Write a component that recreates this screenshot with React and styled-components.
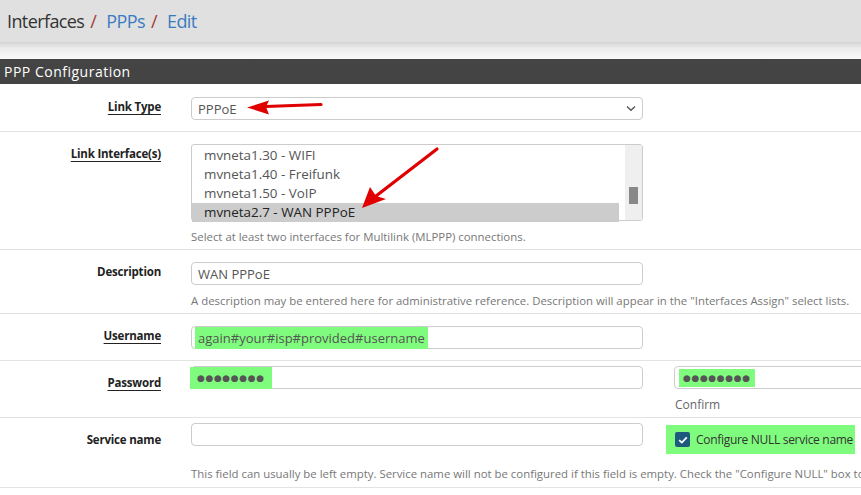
import React from "react";
import styled, { createGlobalStyle } from "styled-components";

const Global = createGlobalStyle`
  html, body { margin: 0; padding: 0; background: #fff; overflow: hidden; }
  body { font-family: "Open Sans", "Noto Sans", Arial, sans-serif; color: #333; }
  * { box-sizing: border-box; }
`;

const Page = styled.div`
  position: relative;
  width: 861px;
  height: 495px;
  overflow: hidden;
`;

const TopBar = styled.div`
  height: 42px;
  background: #e0e0e0;
  display: flex;
  align-items: center;
  padding-left: 7px;
  font-size: 18px;
  letter-spacing: -0.6px;
`;

const Crumb = styled.span`
  color: ${(p) => (p.$link ? "#3b7bc0" : "#333")};
`;

const Sep = styled.span`
  color: #a33b3b;
  margin: 0 10px 0 6px;
`;

const Shade = styled.div`
  height: 17px;
  background: linear-gradient(#d4d4d4, #ececec 40%, #f8f8f8);
  border-bottom: 1px solid #fafafa;
`;

const PanelHead = styled.div`
  height: 25px;
  background: #444;
  color: #fff;
  font-size: 14px;
  letter-spacing: 0.5px;
  padding-left: 4px;
  display: flex;
  align-items: center;
`;

const Row = styled.div`
  display: grid;
  grid-template-columns: 161px 452px 1fr;
  column-gap: 30px;
  align-items: start;
  padding: ${(p) => p.$pad || "12px 0 11px"};
  border-bottom: 1px solid #e3e3e3;
`;

const Label = styled.div`
  text-align: right;
  font-size: 11.5px;
  font-weight: 700;
  letter-spacing: -0.2px;
  color: #222;
  line-height: 20px;
  text-decoration: ${(p) => (p.$u ? "underline" : "none")};
  text-underline-offset: 3px;
`;

const Field = styled.div`
  display: flex;
  flex-direction: column;
  margin-top: ${(p) => p.$shift || 0}px;
`;

const Box = styled.div`
  height: 23px;
  border: 1px solid #ccc;
  border-radius: 4px;
  background: #fff;
  display: flex;
  align-items: center;
  padding: 0 6px;
  font-size: 13px;
  color: #555;
  white-space: nowrap;
  position: relative;
`;

const SelectBox = styled(Box)`
  justify-content: space-between;
  padding-right: 6px;
`;

const ListBox = styled.div`
  height: 77px;
  border: 1px solid #ccc;
  border-radius: 3px;
  display: flex;
  font-size: 13.4px;
  color: #555;
`;

const Items = styled.div`
  flex: 1;
  margin-right: 6px;
  display: flex;
  flex-direction: column;
  padding-top: 1px;
`;

const Item = styled.div`
  height: 19px;
  line-height: 19px;
  padding-left: 12px;
  background: ${(p) => (p.$sel ? "#cccccc" : "transparent")};
  color: ${(p) => (p.$sel ? "#222" : "#555")};
`;

const Track = styled.div`
  width: 17px;
  background: #efefef;
  display: flex;
  justify-content: center;
  padding-top: 42px;
`;

const Thumb = styled.div`
  width: 9px;
  height: 17px;
  background: #888;
`;

const Help = styled.div`
  font-size: 11.4px;
  color: #777;
  line-height: 16px;
  margin-top: ${(p) => p.$mt || 8}px;
  white-space: nowrap;
`;

const ConfirmText = styled(Help)`
  margin-left: 2px;
  font-size: 12px;
  color: #666;
`;

const Mark = styled.span`
  background: #7ffc7d;
  display: inline-flex;
  align-items: center;
  height: ${(p) => p.$h || 22}px;
  padding: 0 ${(p) => p.$px || 4}px;
  margin-left: ${(p) => p.$ml || 0}px;
`;

const Dots = styled.span`
  font-family: "DejaVu Sans", sans-serif;
  font-size: 9px;
  letter-spacing: 0.6px;
  color: #555;
`;

const Third = styled.div`
  display: flex;
  flex-direction: column;
  margin-top: ${(p) => p.$shift || 0}px;
`;

const ConfirmBox = styled(Box)`
  margin-left: 1px;
  width: 460px;
  padding-left: 4px;
`;

const CheckWrap = styled.label`
  margin-left: -7px;
  margin-top: 2px;
  width: 189px;
  height: 29px;
  background: #7ffc7d;
  display: flex;
  align-items: center;
  padding-left: 9px;
  gap: 6px;
  font-size: 12px;
  letter-spacing: -0.3px;
  color: #333;
  white-space: nowrap;
`;

const CheckBox = styled.span`
  width: 15px;
  height: 15px;
  border-radius: 2px;
  background: #1d5a7e;
  display: inline-flex;
  align-items: center;
  justify-content: center;
  flex: none;
`;

const Overlay = styled.svg`
  position: absolute;
  left: 0;
  top: 0;
  pointer-events: none;
`;

export default function App() {
  return (
    <Page>
      <Global />
      <TopBar>
        <Crumb>Interfaces</Crumb>
        <Sep>/</Sep>
        <Crumb $link>PPPs</Crumb>
        <Sep>/</Sep>
        <Crumb $link>Edit</Crumb>
      </TopBar>
      <Shade />
      <PanelHead>PPP Configuration</PanelHead>

      <Row $pad="13px 0 11px">
        <Label $u>Link Type</Label>
        <Field>
          <SelectBox>
            <span>PPPoE</span>
            <svg width="10" height="7" viewBox="0 0 10 7">
              <path d="M1 1.5 L5 5.2 L9 1.5" fill="none" stroke="#555" strokeWidth="1.4" />
            </svg>
          </SelectBox>
        </Field>
        <div />
      </Row>

      <Row $pad="12px 0 4px">
        <Label $u>Link Interface(s)</Label>
        <Field>
          <ListBox>
            <Items>
              <Item>mvneta1.30 - WIFI</Item>
              <Item>mvneta1.40 - Freifunk</Item>
              <Item>mvneta1.50 - VoIP</Item>
              <Item $sel>mvneta2.7 - WAN PPPoE</Item>
            </Items>
            <Track>
              <Thumb />
            </Track>
          </ListBox>
          <Help>Select at least two interfaces for Multilink (MLPPP) connections.</Help>
        </Field>
        <div />
      </Row>

      <Row $pad="12px 0 4px">
        <Label>Description</Label>
        <Field>
          <Box>WAN PPPoE</Box>
          <Help>
            A description may be entered here for administrative reference. Description will appear in the "Interfaces Assign" select lists.
          </Help>
        </Field>
        <div />
      </Row>

      <Row $pad="12px 0 11px">
        <Label $u>Username</Label>
        <Field>
          <Box style={{ paddingLeft: 3 }}>
            <Mark $px={3}>again#your#isp#provided#username</Mark>
          </Box>
        </Field>
        <div />
      </Row>

      <Row $pad="12px 0 4px">
        <Label $u>Password</Label>
        <Field $shift={-7}>
          <Box style={{ paddingLeft: 0 }}>
            <Mark $px={7} $ml={-2}>
              <Dots>●●●●●●●●</Dots>
            </Mark>
          </Box>
        </Field>
        <Third $shift={-7}>
          <ConfirmBox>
            <Mark $h={18} $px={4}>
              <Dots>●●●●●●●●</Dots>
            </Mark>
          </ConfirmBox>
          <ConfirmText>Confirm</ConfirmText>
        </Third>
      </Row>

      <Row $pad="12px 0 5px">
        <Label>Service name</Label>
        <Field $shift={-7}>
          <Box />
          <Help $mt={20}>
            This field can usually be left empty. Service name will not be configured if this field is empty. Check the "Configure NULL" box to
          </Help>
        </Field>
        <Third $shift={-7}>
          <CheckWrap>
            <CheckBox>
              <svg width="10" height="8" viewBox="0 0 10 8">
                <path d="M1.2 4.2 L3.8 6.6 L8.8 1.3" fill="none" stroke="#fff" strokeWidth="1.8" />
              </svg>
            </CheckBox>
            Configure NULL service name
          </CheckWrap>
        </Third>
      </Row>

      <Overlay width="861" height="495" viewBox="0 0 861 495">
        <path d="M321 104.5 L266 106.5" stroke="#e00000" strokeWidth="3.2" strokeLinecap="round" />
        <path d="M247 107.5 L269 100.5 L266 107 L269 114.5 Z" fill="#e00000" />
        <path d="M437 149 L376 196" stroke="#e00000" strokeWidth="3.2" strokeLinecap="round" />
        <path d="M362 208 L370 187 L376 196 L386 199 Z" fill="#e00000" />
      </Overlay>
    </Page>
  );
}
